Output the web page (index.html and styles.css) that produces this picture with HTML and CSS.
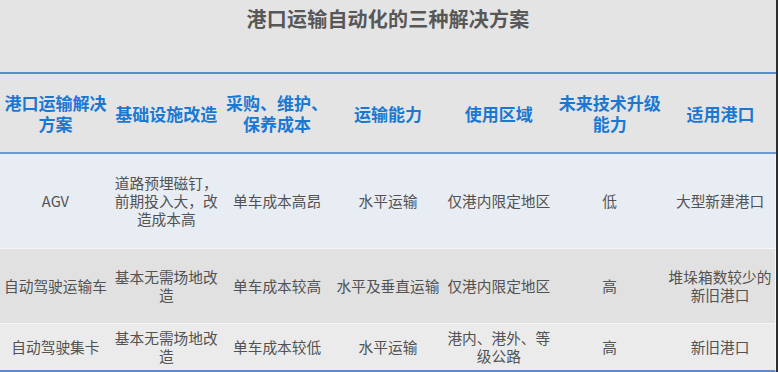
FILE: index.html
```html
<!DOCTYPE html>
<html lang="zh-CN">
<head>
<meta charset="utf-8">
<title>港口运输自动化的三种解决方案</title>
<link rel="stylesheet" href="styles.css">
</head>
<body>
<div class="page">
  <div class="title-area">
    <h1 class="title">港口运输自动化的三种解决方案</h1>
  </div>
  <table class="grid">
    <colgroup>
      <col><col><col><col><col><col><col>
    </colgroup>
    <thead>
      <tr class="head-row">
        <th>港口运输解决方案</th>
        <th>基础设施改造</th>
        <th>采购、维护、保养成本</th>
        <th>运输能力</th>
        <th>使用区域</th>
        <th>未来技术升级能力</th>
        <th>适用港口</th>
      </tr>
    </thead>
    <tbody>
      <tr class="row row-a">
        <td>AGV</td>
        <td>道路预埋磁钉，前期投入大，改造成本高</td>
        <td>单车成本高昂</td>
        <td>水平运输</td>
        <td>仅港内限定地区</td>
        <td>低</td>
        <td>大型新建港口</td>
      </tr>
      <tr class="row row-b">
        <td>自动驾驶运输车</td>
        <td>基本无需场地改造</td>
        <td>单车成本较高</td>
        <td>水平及垂直运输</td>
        <td>仅港内限定地区</td>
        <td>高</td>
        <td>堆垛箱数较少的新旧港口</td>
      </tr>
      <tr class="row row-c">
        <td>自动驾驶集卡</td>
        <td>基本无需场地改造</td>
        <td>单车成本较低</td>
        <td>水平运输</td>
        <td>港内、港外、等级公路</td>
        <td>高</td>
        <td>新旧港口</td>
      </tr>
    </tbody>
  </table>
</div>
</body>
</html>
```

FILE: styles.css
```css
html, body {
  margin: 0;
  padding: 0;
  background: #e3e3e3;
}

body {
  font-family: "Noto Sans CJK SC", "Noto Sans", sans-serif;
  width: 778px;
  height: 372px;
  overflow: hidden;
}

.page {
  width: 776px;
  height: 372px;
  border-right: 2px solid #2e2e2e;
  background: #e4e4e4;
  display: flex;
  flex-direction: column;
}

.title-area {
  height: 72px;
  flex: none;
  display: flex;
  justify-content: center;
  box-sizing: border-box;
  padding-top: 4px;
}

.title {
  margin: 0;
  font-size: 20px;
  line-height: 30px;
  font-weight: 700;
  color: #575757;
  letter-spacing: 0.2px;
}

.grid {
  width: 776px;
  table-layout: fixed;
  border-collapse: separate;
  border-spacing: 0;
}

.grid th,
.grid td {
  text-align: center;
  vertical-align: middle;
  padding: 0 3px;
  box-sizing: border-box;
}

.head-row th {
  height: 82px;
  border-top: 2px solid #5a8ccb;
  border-bottom: 2px solid #6c9bd3;
  background: #e4e4e4;
  color: #1b78d2;
  font-size: 17px;
  line-height: 21px;
  font-weight: 700;
}

.row td {
  color: #525252;
  font-size: 14.7px;
  line-height: 18px;
  font-weight: 400;
  border-bottom: 1px solid #f6f6f6;
}

.row td:last-child {
  border-right: 1px solid #f6f6f6;
}

.row-a td {
  height: 95px;
  background: #e8ecf3;
}

.row-b td {
  height: 75px;
  background: #e1e1e1;
}

.row-c td {
  height: 48px;
  background: #ebebeb;
  border-bottom: 2px solid #5a8ccb;
}
```
